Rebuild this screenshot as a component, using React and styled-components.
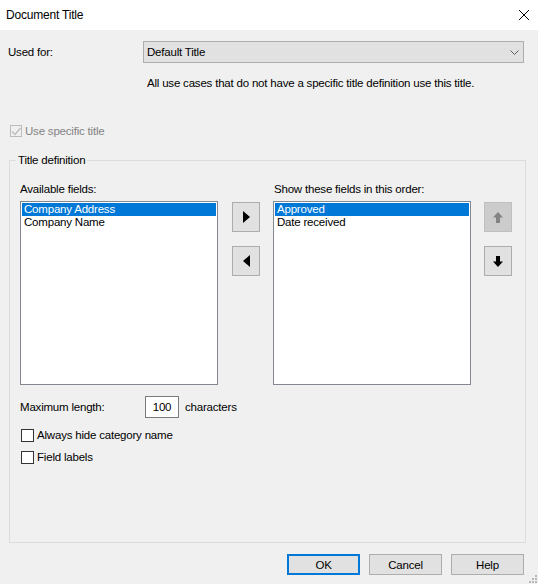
import React, { useState } from 'react';
import styled, { createGlobalStyle } from 'styled-components';

const GlobalStyle = createGlobalStyle`
  html, body {
    margin: 0;
    padding: 0;
    background: #f0f0f0;
  }
  * {
    box-sizing: border-box;
  }
`;

const Dialog = styled.div`
  position: relative;
  width: 538px;
  height: 584px;
  background: #f0f0f0;
  font-family: 'Segoe UI', 'Liberation Sans', Arial, sans-serif;
  font-size: 11.5px;
  letter-spacing: -0.2px;
  color: #000000;
  display: flex;
  flex-direction: column;
  overflow: hidden;
`;

const TitleBar = styled.div`
  height: 30px;
  background: #ffffff;
  display: flex;
  align-items: center;
  justify-content: space-between;
  padding: 0 9px 0 6px;
`;

const TitleText = styled.span`
  font-size: 12px;
  line-height: 16px;
`;

const CloseIcon = styled.svg`
  width: 10px;
  height: 10px;
`;

const Body = styled.div`
  flex: 1;
  display: flex;
  flex-direction: column;
`;

const UsedForRow = styled.div`
  display: flex;
  align-items: center;
  margin-top: 11px;
  padding-left: 8px;
  height: 22px;
`;

const FieldLabel = styled.span`
  width: ${p => p.width}px;
  flex-shrink: 0;
  line-height: 16px;
`;

const Dropdown = styled.div`
  width: 381px;
  height: 22px;
  background: #e1e1e1;
  border: 1px solid #adadad;
  display: flex;
  align-items: center;
  justify-content: space-between;
  padding: 0 4px 0 3px;
  line-height: 16px;
`;

const Chevron = styled.svg`
  width: 9px;
  height: 5px;
`;

const HelpText = styled.div`
  margin-top: 12px;
  padding-left: 147px;
  line-height: 16px;
`;

const CheckRow = styled.label`
  display: flex;
  align-items: center;
  gap: 3px;
  line-height: 16px;
  height: 16px;
  margin-top: ${p => p.top}px;
  padding-left: ${p => p.left}px;
  color: ${p => (p.disabled ? '#838383' : '#000000')};
`;

const CheckBox = styled.span`
  width: ${p => p.size}px;
  height: ${p => p.size}px;
  border: 1px solid ${p => (p.disabled ? '#bcbcbc' : '#333333')};
  background: ${p => (p.disabled ? '#f0f0f0' : '#ffffff')};
  display: flex;
  align-items: center;
  justify-content: center;
  flex-shrink: 0;
`;

const GroupBox = styled.div`
  position: relative;
  margin: 21px 12px 0 9px;
  height: 383px;
  border: 1px solid #dcdcdc;
  padding: 20px 0 0 10px;
  display: flex;
  flex-direction: column;
`;

const GroupLegend = styled.span`
  position: absolute;
  top: -9px;
  left: 6px;
  padding: 0 2px;
  background: #f0f0f0;
  line-height: 16px;
`;

const FieldsRow = styled.div`
  display: flex;
  align-items: flex-start;
`;

const ListColumn = styled.div`
  display: flex;
  flex-direction: column;
  gap: 4px;
  width: 198px;
`;

const ColumnLabel = styled.span`
  line-height: 16px;
  padding-left: ${p => p.indent || 0}px;
  white-space: nowrap;
`;

const ListBox = styled.div`
  height: 184px;
  background: #ffffff;
  border: 1px solid #828790;
  padding: 1px;
`;

const ListItem = styled.div`
  height: 13px;
  line-height: 13px;
  padding-left: 2px;
  white-space: nowrap;
  background: ${p => (p.selected ? '#0078d7' : 'transparent')};
  color: ${p => (p.selected ? '#ffffff' : '#000000')};
  cursor: default;
`;

const ButtonColumn = styled.div`
  display: flex;
  flex-direction: column;
  gap: 14px;
  margin: 21px ${p => p.right}px 0 ${p => p.left}px;
`;

const IconButton = styled.button`
  width: 28px;
  height: 30px;
  padding: 0;
  border: 1px solid ${p => (p.disabled ? '#bfbfbf' : '#adadad')};
  background: ${p => (p.disabled ? '#cccccc' : '#e1e1e1')};
  display: flex;
  align-items: center;
  justify-content: center;
`;

const LengthRow = styled.div`
  display: flex;
  align-items: center;
  margin-top: 11px;
  height: 22px;
`;

const NumberInput = styled.input`
  width: 34px;
  height: 22px;
  border: 1px solid #7a7a7a;
  background: #ffffff;
  font: inherit;
  letter-spacing: inherit;
  text-align: center;
  padding: 0;
  margin-right: 6px;
  outline: none;
`;

const Footer = styled.div`
  display: flex;
  justify-content: flex-end;
  gap: 9px;
  margin-top: 11px;
  padding-right: 14px;
`;

const DialogButton = styled.button`
  width: 73px;
  height: 21px;
  padding: 0;
  font: inherit;
  letter-spacing: inherit;
  color: #000000;
  background: #e1e1e1;
  border: ${p => (p.primary ? '2px solid #0078d7' : '1px solid #adadad')};
`;

const Grip = styled.svg`
  position: absolute;
  right: 1px;
  bottom: 1px;
  width: 8px;
  height: 8px;
`;

const TriangleRight = () => (
  <svg width="7" height="12" viewBox="0 0 7 12"><path d="M0 0 L7 6 L0 12 Z" fill="#000" /></svg>
);

const TriangleLeft = () => (
  <svg width="7" height="12" viewBox="0 0 7 12"><path d="M7 0 L0 6 L7 12 Z" fill="#000" /></svg>
);

const ArrowUp = ({ color }) => (
  <svg width="10" height="11" viewBox="0 0 10 11"><path d="M5 0 L10 5.5 L7 5.5 L7 11 L3 11 L3 5.5 L0 5.5 Z" fill={color} /></svg>
);

const ArrowDown = ({ color }) => (
  <svg width="10" height="11" viewBox="0 0 10 11"><path d="M3 0 L7 0 L7 5.5 L10 5.5 L5 11 L0 5.5 L3 5.5 Z" fill={color} /></svg>
);

const CheckMark = () => (
  <svg width="10" height="9" viewBox="0 0 10 9"><path d="M1 4.5 L4 7.5 L9.5 1" fill="none" stroke="#bcbcbc" strokeWidth="1.3" /></svg>
);

const available = ['Company Address', 'Company Name'];
const ordered = ['Approved', 'Date received'];

export default function App() {
  const [leftSel, setLeftSel] = useState(0);
  const [rightSel, setRightSel] = useState(0);

  return (
    <Dialog>
      <GlobalStyle />
      <TitleBar>
        <TitleText>Document Title</TitleText>
        <CloseIcon viewBox="0 0 10 10">
          <path d="M0 0 L10 10 M10 0 L0 10" stroke="#000" strokeWidth="1" />
        </CloseIcon>
      </TitleBar>
      <Body>
        <UsedForRow>
          <FieldLabel width={135}>Used for:</FieldLabel>
          <Dropdown>
            <span>Default Title</span>
            <Chevron viewBox="0 0 9 5">
              <path d="M0.5 0.5 L4.5 4.5 L8.5 0.5" fill="none" stroke="#606060" strokeWidth="1" />
            </Chevron>
          </Dropdown>
        </UsedForRow>
        <HelpText>All use cases that do not have a specific title definition use this title.</HelpText>
        <CheckRow top={32} left={10} disabled>
          <CheckBox size={12} disabled><CheckMark /></CheckBox>
          Use specific title
        </CheckRow>
        <GroupBox>
          <GroupLegend>Title definition</GroupLegend>
          <FieldsRow>
            <ListColumn>
              <ColumnLabel>Available fields:</ColumnLabel>
              <ListBox>
                {available.map((f, i) => (
                  <ListItem key={f} selected={i === leftSel} onClick={() => setLeftSel(i)}>{f}</ListItem>
                ))}
              </ListBox>
            </ListColumn>
            <ButtonColumn left={14} right={13}>
              <IconButton><TriangleRight /></IconButton>
              <IconButton><TriangleLeft /></IconButton>
            </ButtonColumn>
            <ListColumn>
              <ColumnLabel indent={1}>Show these fields in this order:</ColumnLabel>
              <ListBox>
                {ordered.map((f, i) => (
                  <ListItem key={f} selected={i === rightSel} onClick={() => setRightSel(i)}>{f}</ListItem>
                ))}
              </ListBox>
            </ListColumn>
            <ButtonColumn left={13} right={0}>
              <IconButton disabled><ArrowUp color="#838383" /></IconButton>
              <IconButton><ArrowDown color="#000" /></IconButton>
            </ButtonColumn>
          </FieldsRow>
          <LengthRow>
            <FieldLabel width={125}>Maximum length:</FieldLabel>
            <NumberInput defaultValue="100" />
            <span>characters</span>
          </LengthRow>
          <CheckRow top={9} left={1}>
            <CheckBox size={13} />
            Always hide category name
          </CheckRow>
          <CheckRow top={6} left={1}>
            <CheckBox size={13} />
            Field labels
          </CheckRow>
        </GroupBox>
        <Footer>
          <DialogButton primary>OK</DialogButton>
          <DialogButton>Cancel</DialogButton>
          <DialogButton>Help</DialogButton>
        </Footer>
      </Body>
      <Grip viewBox="0 0 8 8">
        <rect x="6" y="0" width="2" height="2" fill="#b8b8b8" />
        <rect x="3" y="3" width="2" height="2" fill="#b8b8b8" />
        <rect x="6" y="3" width="2" height="2" fill="#b8b8b8" />
        <rect x="0" y="6" width="2" height="2" fill="#b8b8b8" />
        <rect x="3" y="6" width="2" height="2" fill="#b8b8b8" />
        <rect x="6" y="6" width="2" height="2" fill="#b8b8b8" />
      </Grip>
    </Dialog>
  );
}
